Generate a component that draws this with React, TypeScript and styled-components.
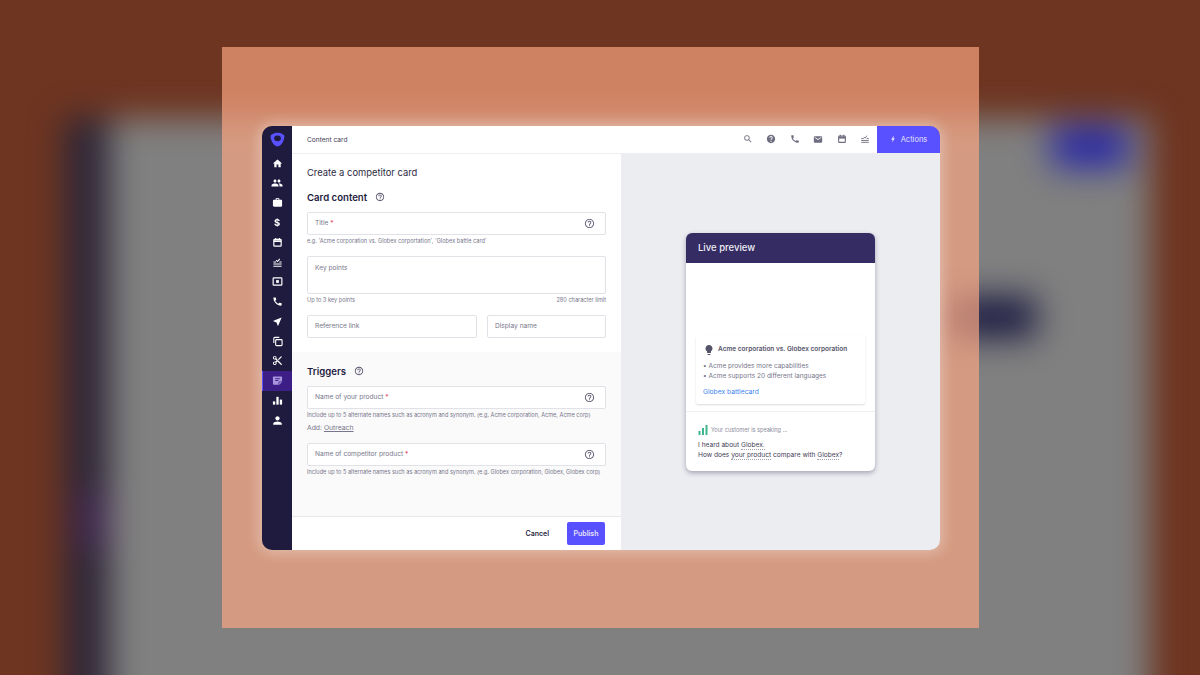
import React from 'react';
import styled, {createGlobalStyle} from 'styled-components';
import {
    MdBolt, MdCall, MdContentCut, MdEmail, MdHelp, MdHelpOutline,
    MdHome, MdLightbulb, MdNearMe, MdPeople, MdPerson, MdSearch, MdWork,
} from 'react-icons/md';

const font = `Inter, "Liberation Sans", sans-serif`;

const Global = createGlobalStyle`
  html, body {
    margin: 0;
    padding: 0;
    background: #6e3521;
  }
  * {
    box-sizing: border-box;
  }
`;

const DollarGlyph = styled.span`
  font-size: 9.5px;
  font-weight: 700;
  line-height: 1;
`

// drawn icons for what the packages do not have
const CalendarIcon = ({size = 11}: {size?: number}) => (
    <svg width={size} height={size} viewBox="0 0 24 24" fill="none" stroke="currentColor" strokeWidth="2.6">
        <rect x="4" y="5" width="16" height="15" rx="1.5"/>
        <path d="M4 9h16" strokeWidth="4"/>
        <path d="M8 2v4M16 2v4"/>
    </svg>
);

const TasksIcon = ({size = 11}: {size?: number}) => (
    <svg width={size} height={size} viewBox="0 0 24 24" fill="none" stroke="currentColor" strokeWidth="2.2">
        <path d="M3 20h18M3 15.5h18M3 11h6M21 11h-5"/>
        <path d="M9 7l3 3 5-6"/>
    </svg>
);

const ScreenIcon = () => (
    <svg width="11" height="11" viewBox="0 0 24 24" fill="none" stroke="currentColor" strokeWidth="2.6">
        <rect x="2.5" y="4" width="19" height="16" rx="1.5"/>
        <rect x="9" y="9" width="6" height="6" fill="currentColor" stroke="none"/>
    </svg>
);

const CopyIcon = () => (
    <svg width="11" height="11" viewBox="0 0 24 24" fill="none" stroke="currentColor" strokeWidth="2.4">
        <rect x="8" y="8" width="14" height="13" rx="2"/>
        <path d="M4 15V5a2 2 0 0 1 2-2h10"/>
    </svg>
);

const NoteIcon = () => (
    <svg width="11" height="11" viewBox="0 0 24 24" fill="none">
        <path d="M4 3h16a2 2 0 0 1 2 2v10l-6 6H4a2 2 0 0 1-2-2V5a2 2 0 0 1 2-2z" fill="#a995dd"/>
        <path d="M7 8h10M7 12h7" stroke="#3d1d86" strokeWidth="2"/>
        <path d="M15 21v-5a1 1 0 0 1 1-1h6" stroke="#3d1d86" strokeWidth="1.6"/>
    </svg>
);

const BarsIcon = () => (
    <svg width="11" height="11" viewBox="0 0 24 24" fill="currentColor">
        <rect x="2" y="14" width="5" height="7"/>
        <rect x="9.5" y="4" width="5" height="17"/>
        <rect x="17" y="10" width="5" height="11"/>
    </svg>
);

const Logo = () => (
    <svg width="15" height="15" viewBox="0 0 24 24">
        <path d="M12 1C17 1 22 3.5 23 6c.6 6-4.5 17-11 17S.4 12 1 6C2 3.5 7 1 12 1z" fill="#5951ff"/>
        <ellipse cx="12" cy="10" rx="5.4" ry="4.6" fill="#1e1b3f"/>
    </svg>
);

const SignalIcon = () => (
    <svg width="10" height="10" viewBox="0 0 10 10" fill="#3fb58d">
        <rect x="0.5" y="6" width="2" height="4"/>
        <rect x="4" y="3" width="2" height="7"/>
        <rect x="7.5" y="0" width="2" height="10"/>
    </svg>
);

type NavEntry = {id: string, icon: React.ReactNode, active?: boolean}

const navItems: Array<NavEntry> = [
    {id: 'home', icon: <MdHome size={11}/>},
    {id: 'people', icon: <MdPeople size={12}/>},
    {id: 'work', icon: <MdWork size={11}/>},
    {id: 'money', icon: <DollarGlyph>$</DollarGlyph>},
    {id: 'calendar', icon: <CalendarIcon/>},
    {id: 'tasks', icon: <TasksIcon/>},
    {id: 'screen', icon: <ScreenIcon/>},
    {id: 'call', icon: <MdCall size={11}/>},
    {id: 'send', icon: <MdNearMe size={11}/>},
    {id: 'copy', icon: <CopyIcon/>},
    {id: 'cut', icon: <MdContentCut size={11}/>},
    {id: 'note', icon: <NoteIcon/>, active: true},
    {id: 'bars', icon: <BarsIcon/>},
    {id: 'person', icon: <MdPerson size={13}/>},
];

type FieldProps = {
    label: string
    required?: boolean
    help?: boolean
}

const Field = (props: FieldProps) => (
    <InputBox>
        <Placeholder>
            {props.label}
            {props.required && <Star> *</Star>}
        </Placeholder>
        {props.help && <HelpSlot><MdHelpOutline size={11}/></HelpSlot>}
    </InputBox>
);

export default function App() {
    return (
        <Stage>
            <Global/>
            <Backdrop>
                <BlurPanel/>
                <BlurStrip/>
                <BlurPurple/>
                <BlurBlue/>
                <BlurDark/>
            </Backdrop>
            <Frame>
                <Window>
                    <Sidebar>
                        <LogoBox><Logo/></LogoBox>
                        {navItems.map(item => (
                            <NavItem key={item.id} $active={item.active}>{item.icon}</NavItem>
                        ))}
                    </Sidebar>
                    <Main>
                        <TopBar>
                            <TopTitle>Content card</TopTitle>
                            <TopIcons>
                                <TopIcon><MdSearch size={10}/></TopIcon>
                                <TopIcon><MdHelp size={10}/></TopIcon>
                                <TopIcon><MdCall size={10}/></TopIcon>
                                <TopIcon><MdEmail size={11}/></TopIcon>
                                <TopIcon><CalendarIcon size={10}/></TopIcon>
                                <TopIcon><TasksIcon size={10}/></TopIcon>
                            </TopIcons>
                            <ActionsButton><MdBolt size={8}/> Actions</ActionsButton>
                        </TopBar>
                        <Columns>
                            <FormColumn>
                                <ContentSection>
                                    <PageTitle>Create a competitor card</PageTitle>
                                    <SectionTitle>
                                        Card content
                                        <MdHelpOutline size={10}/>
                                    </SectionTitle>
                                    <Field label="Title" required help/>
                                    <Hint>e.g. 'Acme corporation vs. Globex corportation', 'Globex battle card'</Hint>
                                    <TextArea><Placeholder>Key points</Placeholder></TextArea>
                                    <HintRow>
                                        <span>Up to 3 key points</span>
                                        <span>280 character limit</span>
                                    </HintRow>
                                    <LinkRow>
                                        <Field label="Reference link"/>
                                        <Field label="Display name"/>
                                    </LinkRow>
                                </ContentSection>
                                <TriggerSection>
                                    <SectionTitle>
                                        Triggers
                                        <MdHelpOutline size={10}/>
                                    </SectionTitle>
                                    <Field label="Name of your product" required help/>
                                    <Hint>Include up to 5 alternate names such as acronym and synonym. (e.g. Acme corporation, Acme, Acme corp)</Hint>
                                    <AddLine>Add: <u>Outreach</u></AddLine>
                                    <Field label="Name of competitor product" required help/>
                                    <Hint>Include up to 5 alternate names such as acronym and synonym. (e.g. Globex corporation, Globex, Globex corp)</Hint>
                                </TriggerSection>
                                <Footer>
                                    <CancelButton>Cancel</CancelButton>
                                    <PublishButton>Publish</PublishButton>
                                </Footer>
                            </FormColumn>
                            <PreviewColumn>
                                <PreviewCard>
                                    <PreviewHeader>Live preview</PreviewHeader>
                                    <PreviewBody>
                                        <BattleCard>
                                            <BattleTitle>
                                                <MdLightbulb size={12}/>
                                                Acme corporation vs. Globex corporation
                                            </BattleTitle>
                                            <BattlePoint>• Acme provides more capabilities</BattlePoint>
                                            <BattlePoint>• Acme supports 20 different languages</BattlePoint>
                                            <BattleLink>Globex battlecard</BattleLink>
                                        </BattleCard>
                                    </PreviewBody>
                                    <Speech>
                                        <SpeakerLine><SignalIcon/> Your customer is speaking ...</SpeakerLine>
                                        <SpeechText>I heard about <Term>Globex.</Term></SpeechText>
                                        <SpeechText>How does <Term>your product</Term> compare with <Term>Globex</Term>?</SpeechText>
                                    </Speech>
                                </PreviewCard>
                            </PreviewColumn>
                        </Columns>
                    </Main>
                </Window>
            </Frame>
        </Stage>
    );
}

const Stage = styled.div`
  position: relative;
  width: 1200px;
  height: 675px;
  overflow: hidden;
  background: #6e3521;
  display: flex;
  justify-content: center;
  padding: 47px 221px 47px 222px;
  font-family: ${font};
`

const Backdrop = styled.div`
  position: absolute;
  inset: 0;
  filter: blur(16px);
`

const BlurPanel = styled.div`
  position: absolute;
  left: 64px;
  top: 118px;
  width: 1086px;
  height: 600px;
  background: #808080;
`

const BlurStrip = styled.div`
  position: absolute;
  left: 64px;
  top: 118px;
  width: 46px;
  height: 600px;
  background: #2f2838;
`

const BlurPurple = styled.div`
  position: absolute;
  left: 76px;
  top: 490px;
  width: 34px;
  height: 60px;
  background: #40284f;
`

const BlurBlue = styled.div`
  position: absolute;
  left: 1052px;
  top: 128px;
  width: 76px;
  height: 38px;
  background: #2020a8;
  filter: blur(8px);
`

const BlurDark = styled.div`
  position: absolute;
  left: 950px;
  top: 296px;
  width: 86px;
  height: 42px;
  background: #1f1e44;
  filter: blur(5px);
`

const Frame = styled.div`
  position: relative;
  width: 757px;
  height: 581px;
  background: rgba(255, 168, 131, 0.67);
  display: flex;
  align-items: center;
  justify-content: center;
  padding-left: 1px;
`

const Window = styled.div`
  width: 678px;
  height: 424px;
  border-radius: 10px;
  overflow: hidden;
  display: flex;
  box-shadow: 0 0 14px 2px rgba(255, 255, 255, 0.38);
  filter: blur(0.3px);
`

const Sidebar = styled.nav`
  width: 30px;
  flex: none;
  background: #1e1b3f;
  color: #fff;
  display: flex;
  flex-direction: column;
`

const LogoBox = styled.div`
  height: 28px;
  display: flex;
  align-items: center;
  justify-content: center;
`

const NavItem = styled.div<{$active?: boolean}>`
  height: 19.75px;
  display: flex;
  align-items: center;
  justify-content: center;
  background: ${props => props.$active ? '#3d1d86' : 'transparent'};
  border-left: ${props => props.$active ? '1px solid #5951ff' : 'none'};
`

const Main = styled.div`
  flex: 1;
  min-width: 0;
  display: flex;
  flex-direction: column;
  background: #fff;
`

const TopBar = styled.header`
  height: 28px;
  flex: none;
  display: flex;
  align-items: center;
  padding-left: 15px;
  border-bottom: 1px solid #eeeef2;
`

const TopTitle = styled.div`
  font-size: 6.6px;
  color: #3f3d56;
  flex: 1;
  padding-top: 1px;
`

const TopIcons = styled.div`
  display: flex;
  align-items: center;
  gap: 13.5px;
  margin-right: 7px;
  color: #6f6e80;
`

const TopIcon = styled.span`
  width: 10px;
  height: 12px;
  display: flex;
  align-items: center;
  justify-content: center;
`

const ActionsButton = styled.div`
  width: 63px;
  height: 28px;
  background: #5951ff;
  color: #e4e3ff;
  font-size: 7.5px;
  display: flex;
  align-items: center;
  justify-content: center;
  gap: 4px;
  padding-right: 1px;
`

const Columns = styled.div`
  flex: 1;
  min-height: 0;
  display: flex;
`

const FormColumn = styled.section`
  width: 329px;
  flex: none;
  display: flex;
  flex-direction: column;
`

const ContentSection = styled.div`
  height: 198px;
  flex: none;
  padding: 12px 15px 0;
  display: flex;
  flex-direction: column;
`

const TriggerSection = styled.div`
  flex: 1;
  background: #fafafa;
  padding: 13px 15px 0;
  display: flex;
  flex-direction: column;
`

const PageTitle = styled.h1`
  margin: 0 0 12px;
  font-size: 9.4px;
  line-height: 13px;
  font-weight: 400;
  color: #2c2a43;
`

const SectionTitle = styled.h2`
  margin: 0 0 8px;
  font-size: 9.6px;
  line-height: 13px;
  font-weight: 600;
  color: #1e1b3f;
  display: flex;
  align-items: center;
  gap: 8px;

  svg {
    color: #55536a;
  }
`

const InputBox = styled.div`
  height: 23px;
  flex: none;
  background: #fff;
  border: 1px solid #e1e1e8;
  border-radius: 2px;
  display: flex;
  align-items: center;
  justify-content: space-between;
  padding: 1px 10px 0 7px;
`

const TextArea = styled(InputBox)`
  height: 38px;
  align-items: flex-start;
  padding-top: 7px;
  margin-top: 11px;
`

const Placeholder = styled.span`
  font-size: 6.6px;
  line-height: 9px;
  color: #77768a;
`

const Star = styled.span`
  color: #e2445c;
`

const HelpSlot = styled.span`
  display: flex;
  color: #5f5d74;
`

const Hint = styled.div`
  margin-top: 2px;
  height: 8px;
  font-size: 5.6px;
  line-height: 8px;
  color: #77768a;
  white-space: nowrap;
`

const HintRow = styled(Hint)`
  display: flex;
  justify-content: space-between;
`

const LinkRow = styled.div`
  margin-top: 11px;
  display: grid;
  grid-template-columns: 170px 119px;
  gap: 10px;
`

const AddLine = styled.div`
  margin-top: 3px;
  margin-bottom: 10px;
  height: 11px;
  font-size: 6.8px;
  line-height: 11px;
  color: #77768a;
`

const Footer = styled.footer`
  height: 34px;
  flex: none;
  border-top: 1px solid #e8e8ec;
  display: flex;
  align-items: center;
  justify-content: flex-end;
  gap: 18px;
  padding-right: 16px;
`

const CancelButton = styled.div`
  font-size: 7px;
  font-weight: 600;
  color: #2c2a43;
`

const PublishButton = styled.div`
  width: 38px;
  height: 23px;
  border-radius: 2px;
  background: #5951ff;
  color: #e4e3ff;
  font-size: 7px;
  font-weight: 600;
  display: flex;
  align-items: center;
  justify-content: center;
`

const PreviewColumn = styled.section`
  flex: 1;
  background: #ecedf1;
  display: flex;
  justify-content: center;
  padding-top: 79px;
`

const PreviewCard = styled.div`
  width: 189px;
  height: 238px;
  border-radius: 6px;
  background: #fff;
  overflow: hidden;
  display: flex;
  flex-direction: column;
  box-shadow: 0 2px 5px rgba(30, 27, 63, 0.35);
`

const PreviewHeader = styled.div`
  height: 30px;
  flex: none;
  background: #352c63;
  color: #eeeef5;
  font-size: 9.5px;
  font-weight: 500;
  display: flex;
  align-items: center;
  padding-left: 12px;
`

const PreviewBody = styled.div`
  height: 149px;
  flex: none;
  padding: 73px 10px 0;
  border-bottom: 1px solid #f0f0f3;
`

const BattleCard = styled.div`
  height: 68px;
  border-radius: 2px;
  background: #fff;
  box-shadow: 0 1px 2px rgba(30, 27, 63, 0.16);
  padding: 8px 7px 0;
`

const BattleTitle = styled.div`
  display: flex;
  align-items: center;
  gap: 3px;
  font-size: 6.5px;
  line-height: 11px;
  font-weight: 600;
  color: #55536a;
  margin-bottom: 5px;
  white-space: nowrap;
`

const BattlePoint = styled.div`
  font-size: 6.5px;
  line-height: 10px;
  color: #77768a;
  white-space: nowrap;
`

const BattleLink = styled.div`
  margin-top: 6px;
  font-size: 6.7px;
  line-height: 10px;
  color: #3b82f0;
`

const Speech = styled.div`
  padding: 13px 12px 0;
`

const SpeakerLine = styled.div`
  display: flex;
  align-items: center;
  gap: 3px;
  font-size: 5.6px;
  line-height: 10px;
  color: #8b8a9b;
  margin-bottom: 5px;
`

const SpeechText = styled.div`
  font-size: 6.6px;
  line-height: 10.5px;
  color: #3f3d56;
  white-space: nowrap;
`

const Term = styled.span`
  border-bottom: 1px dotted #a2a1b0;
`
